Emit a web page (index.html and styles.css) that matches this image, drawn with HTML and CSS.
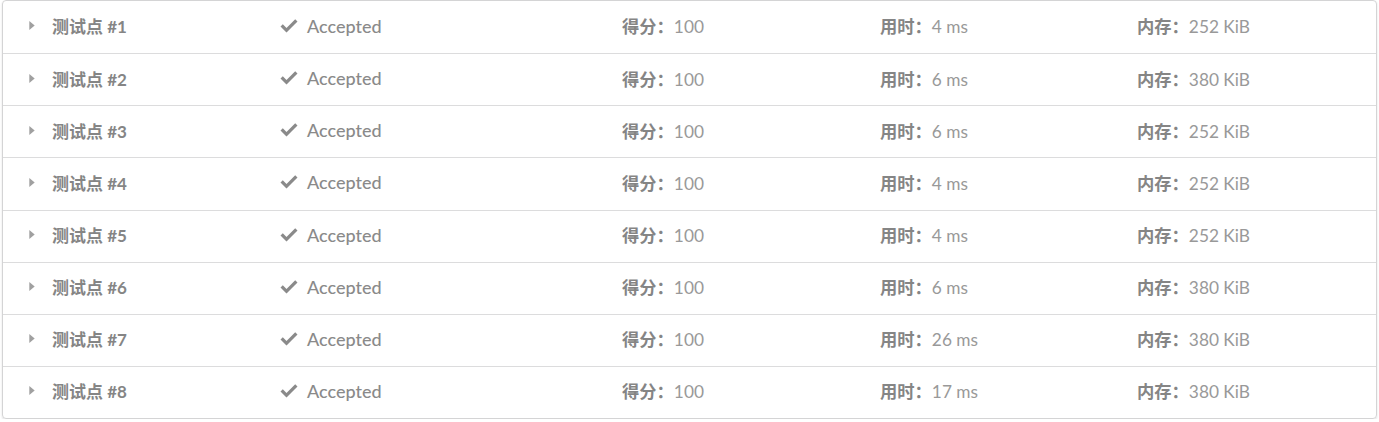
FILE: index.html
```html
<!DOCTYPE html>
<html lang="zh">
<head>
<meta charset="utf-8">
<link rel="stylesheet" href="styles.css">
</head>
<body>
<div class="wrap">
  <div class="list">
    <div class="row"><span class="c1"><svg class="tri" viewBox="0 0 6 10"><path d="M0 0L6 5L0 10Z"/></svg><b>测试点 #1</b></span><span class="c2"><svg class="chk" viewBox="0 0 18 14"><path d="M0.5 7.5L6.5 13.5L17.5 2.5L15.2 0.2L6.5 8.9L2.8 5.2Z"/></svg>Accepted</span><span class="c3"><b>得分：</b>100</span><span class="c4"><b>用时：</b>4 ms</span><span class="c5"><b>内存：</b>252 KiB</span></div>
    <div class="row"><span class="c1"><svg class="tri" viewBox="0 0 6 10"><path d="M0 0L6 5L0 10Z"/></svg><b>测试点 #2</b></span><span class="c2"><svg class="chk" viewBox="0 0 18 14"><path d="M0.5 7.5L6.5 13.5L17.5 2.5L15.2 0.2L6.5 8.9L2.8 5.2Z"/></svg>Accepted</span><span class="c3"><b>得分：</b>100</span><span class="c4"><b>用时：</b>6 ms</span><span class="c5"><b>内存：</b>380 KiB</span></div>
    <div class="row"><span class="c1"><svg class="tri" viewBox="0 0 6 10"><path d="M0 0L6 5L0 10Z"/></svg><b>测试点 #3</b></span><span class="c2"><svg class="chk" viewBox="0 0 18 14"><path d="M0.5 7.5L6.5 13.5L17.5 2.5L15.2 0.2L6.5 8.9L2.8 5.2Z"/></svg>Accepted</span><span class="c3"><b>得分：</b>100</span><span class="c4"><b>用时：</b>6 ms</span><span class="c5"><b>内存：</b>252 KiB</span></div>
    <div class="row"><span class="c1"><svg class="tri" viewBox="0 0 6 10"><path d="M0 0L6 5L0 10Z"/></svg><b>测试点 #4</b></span><span class="c2"><svg class="chk" viewBox="0 0 18 14"><path d="M0.5 7.5L6.5 13.5L17.5 2.5L15.2 0.2L6.5 8.9L2.8 5.2Z"/></svg>Accepted</span><span class="c3"><b>得分：</b>100</span><span class="c4"><b>用时：</b>4 ms</span><span class="c5"><b>内存：</b>252 KiB</span></div>
    <div class="row"><span class="c1"><svg class="tri" viewBox="0 0 6 10"><path d="M0 0L6 5L0 10Z"/></svg><b>测试点 #5</b></span><span class="c2"><svg class="chk" viewBox="0 0 18 14"><path d="M0.5 7.5L6.5 13.5L17.5 2.5L15.2 0.2L6.5 8.9L2.8 5.2Z"/></svg>Accepted</span><span class="c3"><b>得分：</b>100</span><span class="c4"><b>用时：</b>4 ms</span><span class="c5"><b>内存：</b>252 KiB</span></div>
    <div class="row"><span class="c1"><svg class="tri" viewBox="0 0 6 10"><path d="M0 0L6 5L0 10Z"/></svg><b>测试点 #6</b></span><span class="c2"><svg class="chk" viewBox="0 0 18 14"><path d="M0.5 7.5L6.5 13.5L17.5 2.5L15.2 0.2L6.5 8.9L2.8 5.2Z"/></svg>Accepted</span><span class="c3"><b>得分：</b>100</span><span class="c4"><b>用时：</b>6 ms</span><span class="c5"><b>内存：</b>380 KiB</span></div>
    <div class="row"><span class="c1"><svg class="tri" viewBox="0 0 6 10"><path d="M0 0L6 5L0 10Z"/></svg><b>测试点 #7</b></span><span class="c2"><svg class="chk" viewBox="0 0 18 14"><path d="M0.5 7.5L6.5 13.5L17.5 2.5L15.2 0.2L6.5 8.9L2.8 5.2Z"/></svg>Accepted</span><span class="c3"><b>得分：</b>100</span><span class="c4"><b>用时：</b>26 ms</span><span class="c5"><b>内存：</b>380 KiB</span></div>
    <div class="row"><span class="c1"><svg class="tri" viewBox="0 0 6 10"><path d="M0 0L6 5L0 10Z"/></svg><b>测试点 #8</b></span><span class="c2"><svg class="chk" viewBox="0 0 18 14"><path d="M0.5 7.5L6.5 13.5L17.5 2.5L15.2 0.2L6.5 8.9L2.8 5.2Z"/></svg>Accepted</span><span class="c3"><b>得分：</b>100</span><span class="c4"><b>用时：</b>17 ms</span><span class="c5"><b>内存：</b>380 KiB</span></div>
  </div>
</div>
</body>
</html>
```

FILE: styles.css
```css
html, body {
  margin: 0;
  padding: 0;
  background: #fff;
}
body {
  font-family: Lato, "Noto Sans CJK SC", sans-serif;
  font-size: 17.3px;
  color: #999;
}
.wrap {
  padding: 0 2px;
}
.list {
  width: 1375px;
  box-sizing: border-box;
  border: 1px solid #d4d4d5;
  border-radius: 4px;
  box-shadow: 0 1px 2px 0 rgba(34,36,38,.15);
  display: grid;
  grid-auto-rows: 52.125px;
}
.row {
  display: grid;
  grid-template-columns: 277px 342px 258px 257px 1fr;
  align-items: center;
  border-top: 1px solid #dcdcdd;
  padding-bottom: 3px;
  box-sizing: border-box;
}
.row:first-child {
  border-top: none;
}
.c1 {
  display: flex;
  align-items: center;
  padding-left: 26px;
}
.tri {
  width: 6px;
  height: 9px;
  fill: #a0a0a0;
  margin-right: 17px;
  margin-left: 0;
}
.c1 b {
  font-weight: 700;
  font-size: 17px;
  color: #858585;
}
.c2 {
  display: flex;
  align-items: center;
  color: #8a8a8a;
  font-size: 18px;
  font-weight: 500;
}
.chk {
  width: 18px;
  height: 14px;
  fill: #8a8a8a;
  margin-right: 9px;
}
.c3 b, .c4 b, .c5 b {
  font-weight: 700;
  color: #858585;
}
```
